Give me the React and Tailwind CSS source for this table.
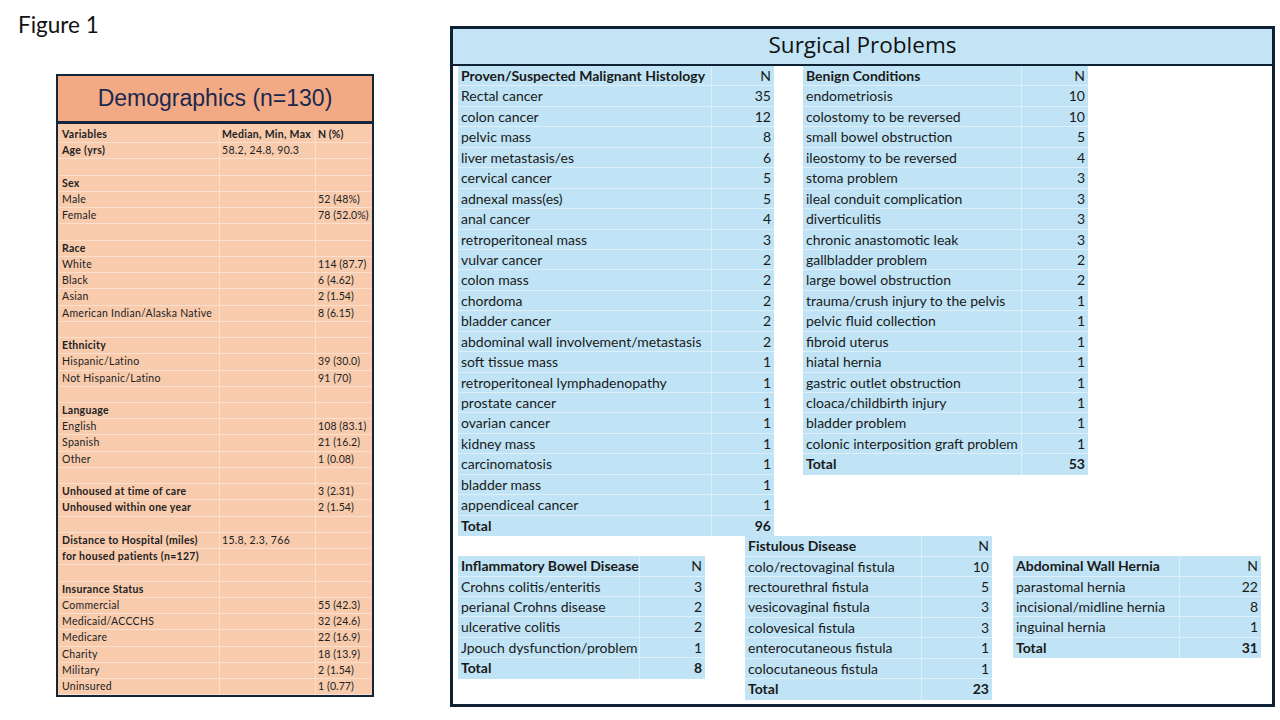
import React from "react";

const demo = [
  ["Variables", "Median, Min, Max", "N (%)", true, true],
  ["Age (yrs)", "58.2, 24.8, 90.3", "", true],
  ["", "", ""],
  ["Sex", "", "", true],
  ["Male", "", "52 (48%)"],
  ["Female", "", "78 (52.0%)"],
  ["", "", ""],
  ["Race", "", "", true],
  ["White", "", "114 (87.7)"],
  ["Black", "", "6 (4.62)"],
  ["Asian", "", "2 (1.54)"],
  ["American Indian/Alaska Native", "", "8 (6.15)"],
  ["", "", ""],
  ["Ethnicity", "", "", true],
  ["Hispanic/Latino", "", "39 (30.0)"],
  ["Not Hispanic/Latino", "", "91 (70)"],
  ["", "", ""],
  ["Language", "", "", true],
  ["English", "", "108 (83.1)"],
  ["Spanish", "", "21 (16.2)"],
  ["Other", "", "1 (0.08)"],
  ["", "", ""],
  ["Unhoused at time of care", "", "3 (2.31)", true],
  ["Unhoused within one year", "", "2 (1.54)", true],
  ["", "", ""],
  ["Distance to Hospital (miles)", "15.8, 2.3, 766", "", true],
  ["for housed patients (n=127)", "", "", true],
  ["", "", ""],
  ["Insurance Status", "", "", true],
  ["Commercial", "", "55 (42.3)"],
  ["Medicaid/ACCCHS", "", "32 (24.6)"],
  ["Medicare", "", "22 (16.9)"],
  ["Charity", "", "18 (13.9)"],
  ["Military", "", "2 (1.54)"],
  ["Uninsured", "", "1 (0.77)"],
];

const malignant = [
  ["Rectal cancer", 35],
  ["colon cancer", 12],
  ["pelvic mass", 8],
  ["liver metastasis/es", 6],
  ["cervical cancer", 5],
  ["adnexal mass(es)", 5],
  ["anal cancer", 4],
  ["retroperitoneal mass", 3],
  ["vulvar cancer", 2],
  ["colon mass", 2],
  ["chordoma", 2],
  ["bladder cancer", 2],
  ["abdominal wall involvement/metastasis", 2],
  ["soft tissue mass", 1],
  ["retroperitoneal lymphadenopathy", 1],
  ["prostate cancer", 1],
  ["ovarian cancer", 1],
  ["kidney mass", 1],
  ["carcinomatosis", 1],
  ["bladder mass", 1],
  ["appendiceal cancer", 1],
];

const benign = [
  ["endometriosis", 10],
  ["colostomy to be reversed", 10],
  ["small bowel obstruction", 5],
  ["ileostomy to be reversed", 4],
  ["stoma problem", 3],
  ["ileal conduit complication", 3],
  ["diverticulitis", 3],
  ["chronic anastomotic leak", 3],
  ["gallbladder problem", 2],
  ["large bowel obstruction", 2],
  ["trauma/crush injury to the pelvis", 1],
  ["pelvic fluid collection", 1],
  ["fibroid uterus", 1],
  ["hiatal hernia", 1],
  ["gastric outlet obstruction", 1],
  ["cloaca/childbirth injury", 1],
  ["bladder problem", 1],
  ["colonic interposition graft problem", 1],
];

const ibd = [
  ["Crohns colitis/enteritis", 3],
  ["perianal Crohns disease", 2],
  ["ulcerative colitis", 2],
  ["Jpouch dysfunction/problem", 1],
];

const fistula = [
  ["colo/rectovaginal fistula", 10],
  ["rectourethral fistula", 5],
  ["vesicovaginal fistula", 3],
  ["colovesical fistula", 3],
  ["enterocutaneous fistula", 1],
  ["colocutaneous fistula", 1],
];

const hernia = [
  ["parastomal hernia", 22],
  ["incisional/midline hernia", 8],
  ["inguinal hernia", 1],
];

function BlueTable({ title, rows, total, width, labelW, className = "" }) {
  const all = [[title, "N", "head"], ...rows.map((r) => [r[0], r[1], "row"]), ["Total", total, "total"]];
  return (
    <div className={"flex flex-col bg-[#c0e4f5] " + className} style={{ width }}>
      {all.map((r, i) => (
        <div key={i} className="flex h-[20.45px] border-b border-[#ddf0fa] last:border-b-0">
          <div
            className={
              "shrink-0 border-r border-[#ddf0fa] pl-[3px] leading-[20px] whitespace-nowrap " +
              (r[2] === "row" ? "font-normal" : "font-bold")
            }
            style={{ width: labelW }}
          >
            {r[0]}
          </div>
          <div
            className={
              "flex-1 pr-[3px] text-right leading-[20px] " + (r[2] === "total" ? "font-bold" : "font-normal")
            }
          >
            {r[1]}
          </div>
        </div>
      ))}
    </div>
  );
}

export default function App() {
  return (
    <div className="w-[1280px] h-[720px] bg-white flex text-[#1a1a1a]" style={{ fontFamily: "Lato, 'Liberation Sans', sans-serif" }}>
      <div className="w-[450px] shrink-0 flex flex-col">
        <div className="pl-[18px] pt-[11px] text-[22.5px] leading-[28px] text-[#111]">Figure 1</div>
        <div className="ml-[56px] mt-[35px] w-[318px] h-[623px] border-2 border-[#14263a] flex flex-col bg-[#f8cbad]">
          <div
            className="h-[48px] shrink-0 bg-[#f2aa84] border-b-[3px] border-[#14263a] flex items-center justify-center text-[23px] text-[#1a2850]"
            style={{ fontFamily: "'Liberation Sans', Arial, sans-serif" }}
          >
            Demographics (n=130)
          </div>
          <div className="flex flex-col px-[1px] pt-[3px] text-[10.5px] tracking-[0.3px] text-[#222]">
            {demo.map((r, i) => (
              <div key={i} className="grid grid-cols-[161px_96px_56px] h-[16.24px] border-b border-[#fbe0cf]">
                <div className={"pl-[3px] leading-[15px] whitespace-nowrap border-r border-[#fbe0cf] " + (r[3] ? "font-bold" : "")}>{r[0]}</div>
                <div className={"pl-[2px] leading-[15px] whitespace-nowrap border-r border-[#fbe0cf] " + (r[4] ? "font-bold" : "")}>{r[1]}</div>
                <div className={"pl-[2px] leading-[15px] whitespace-nowrap tracking-[0.1px] " + (r[4] ? "font-bold" : "")}>{r[2]}</div>
              </div>
            ))}
          </div>
        </div>
      </div>
      <div className="mt-[26px] w-[825px] h-[681px] border-[3px] border-[#0f2233] flex flex-col">
        <div
          className="h-[37px] shrink-0 bg-[#c2e4f5] border-b-[2px] border-[#0f2233] flex items-center justify-center pb-[3px] text-[22.5px] text-[#111]"
          style={{ fontFamily: "'Open Sans', sans-serif" }}
        >
          Surgical Problems
        </div>
        <div className="flex flex-col text-[14px] pl-[5px]">
          <div className="flex items-start">
            <BlueTable title="Proven/Suspected Malignant Histology" rows={malignant} total={96} width={316} labelW={254} />
            <BlueTable title="Benign Conditions" rows={benign} total={53} width={285} labelW={219} className="ml-[29px]" />
          </div>
          <div className="flex items-start">
            <BlueTable title="Inflammatory Bowel Disease" rows={ibd} total={8} width={247} labelW={182} className="mt-[20px]" />
            <BlueTable title="Fistulous Disease" rows={fistula} total={23} width={247} labelW={177} className="ml-[40px]" />
            <BlueTable title="Abdominal Wall Hernia" rows={hernia} total={31} width={248} labelW={167} className="ml-[21px] mt-[20px]" />
          </div>
        </div>
      </div>
    </div>
  );
}
